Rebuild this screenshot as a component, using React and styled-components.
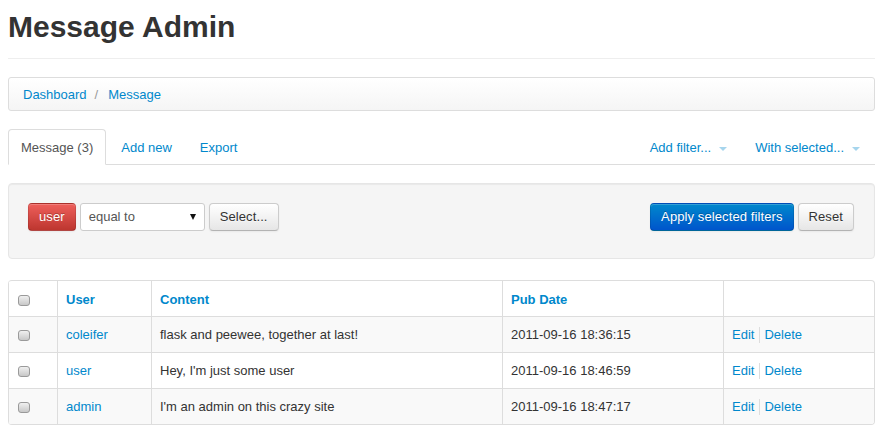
import React from "react";
import styled, { createGlobalStyle } from "styled-components";

const GlobalStyle = createGlobalStyle`
  body {
    margin: 0;
    background: #fff;
    font-family: "Liberation Sans", Arial, Helvetica, sans-serif;
    font-size: 13px;
    line-height: 18px;
    color: #333;
  }
  a {
    color: #0088cc;
    text-decoration: none;
  }
`;

const Container = styled.div`
  width: 867px;
  margin-left: 8px;
`;

const PageHeader = styled.div`
  padding: 9px 0 13px;
  margin-bottom: 18px;
  border-bottom: 1px solid #eee;
`;

const Title = styled.h1`
  margin: 0;
  font-size: 30px;
  line-height: 36px;
  font-weight: bold;
  color: #333;
`;

const Breadcrumb = styled.ul`
  list-style: none;
  margin: 0 0 18px;
  padding: 8px 14px 6px;
  display: flex;
  border: 1px solid #ddd;
  border-radius: 3px;
  background: linear-gradient(to bottom, #ffffff, #f5f5f5);
  box-shadow: inset 0 1px 0 #fff;
`;

const Crumb = styled.li`
  display: flex;
`;

const Divider = styled.span`
  color: #999;
  padding: 0 10px 0 8px;
`;

const Tabs = styled.ul`
  list-style: none;
  margin: 0 0 18px;
  padding: 0;
  display: flex;
  border-bottom: 1px solid #ddd;
`;

const Tab = styled.li`
  margin-bottom: -1px;
  margin-right: 2px;
  margin-left: ${({ $push }) => ($push ? "auto" : "0")};
`;

const TabLink = styled.a`
  display: flex;
  align-items: center;
  padding: 9px 12px 7px;
  line-height: 18px;
  border: 1px solid ${({ $active }) => ($active ? "#ddd" : "transparent")};
  border-bottom-color: transparent;
  border-radius: 4px 4px 0 0;
  background: ${({ $active }) => ($active ? "#fff" : "transparent")};
  color: ${({ $active }) => ($active ? "#555" : "#0088cc")};
`;

const Caret = styled.span`
  display: inline-block;
  width: 0;
  height: 0;
  margin-left: 8px;
  margin-top: 1px;
  border-left: 4px solid transparent;
  border-right: 4px solid transparent;
  border-top: 4px solid #0088cc;
  opacity: 0.35;
`;

const Well = styled.div`
  display: flex;
  justify-content: space-between;
  padding: 19px 20px 27px 19px;
  margin-bottom: 21px;
  background: #f5f5f5;
  border: 1px solid #e6e6e6;
  border-radius: 4px;
  box-shadow: inset 0 1px 1px rgba(0, 0, 0, 0.05);
`;

const Group = styled.div`
  display: flex;
  gap: 4px;
`;

const variants = {
  default: {
    bg: "linear-gradient(to bottom, #ffffff, #e6e6e6)",
    color: "#333",
    border: "#ccc #ccc #b3b3b3",
    shadow: "0 1px 0 rgba(255,255,255,0.5)",
  },
  danger: {
    bg: "linear-gradient(to bottom, #ee5f5b, #bd362f)",
    color: "#fff",
    border: "rgba(0,0,0,0.1) rgba(0,0,0,0.1) rgba(0,0,0,0.25)",
    shadow: "0 -1px 0 rgba(0,0,0,0.25)",
  },
  primary: {
    bg: "linear-gradient(to bottom, #0088cc, #0055cc)",
    color: "#fff",
    border: "rgba(0,0,0,0.1) rgba(0,0,0,0.1) rgba(0,0,0,0.25)",
    shadow: "0 -1px 0 rgba(0,0,0,0.25)",
  },
};

const Button = styled.button`
  font-family: inherit;
  font-size: 13px;
  line-height: 18px;
  padding: 4px 10px;
  letter-spacing: 0.1px;
  border: 1px solid;
  border-color: ${({ $kind }) => variants[$kind].border};
  border-radius: 4px;
  background: ${({ $kind }) => variants[$kind].bg};
  color: ${({ $kind }) => variants[$kind].color};
  text-shadow: ${({ $kind }) => variants[$kind].shadow};
  box-shadow: inset 0 1px 0 rgba(255, 255, 255, 0.2), 0 1px 2px rgba(0, 0, 0, 0.05);
  cursor: pointer;
`;

const Select = styled.div`
  width: 125px;
  height: 28px;
  box-sizing: border-box;
  display: flex;
  align-items: center;
  justify-content: space-between;
  padding: 0 8px 0 8px;
  background: #fff;
  border: 1px solid #ccc;
  border-radius: 3px;
  color: #555;
`;

const SelectArrow = styled.span`
  width: 0;
  height: 0;
  border-left: 3px solid transparent;
  border-right: 3px solid transparent;
  border-top: 6px solid #111;
`;

const Table = styled.table`
  width: 867px;
  border-collapse: separate;
  border-spacing: 0;
  border: 1px solid #ddd;
  border-left: 0;
  border-radius: 4px;
  overflow: hidden;
`;

const Th = styled.th`
  text-align: left;
  font-weight: bold;
  padding: 9px 8px 7px;
  line-height: 19px;
  border-left: 1px solid #ddd;
  vertical-align: top;
  color: #0088cc;
`;

const Row = styled.tr`
  background: ${({ $odd }) => ($odd ? "#f9f9f9" : "#fff")};
`;

const Td = styled.td`
  padding: 8px;
  line-height: 19px;
  border-left: 1px solid #ddd;
  border-top: 1px solid #ddd;
  vertical-align: top;
`;

const Check = styled.input.attrs({ type: "checkbox" })`
  appearance: none;
  display: block;
  width: 12px;
  height: 11px;
  margin: 5px 0 0 1px;
  border: 1px solid #9a9a9a;
  border-radius: 3px;
  background: linear-gradient(to bottom, #f0f0f0, #c8c8c8);
`;

const Actions = styled.div`
  display: flex;
  align-items: center;
`;

const Sep = styled.span`
  width: 1px;
  height: 16px;
  background: #ddd;
  margin: 0 4px 0 5px;
`;

const rows = [
  { user: "coleifer", content: "flask and peewee, together at last!", date: "2011-09-16 18:36:15" },
  { user: "user", content: "Hey, I'm just some user", date: "2011-09-16 18:46:59" },
  { user: "admin", content: "I'm an admin on this crazy site", date: "2011-09-16 18:47:17" },
];

const App = () => {
  return (
    <Container>
      <GlobalStyle />
      <PageHeader>
        <Title>Message Admin</Title>
      </PageHeader>
      <Breadcrumb>
        <Crumb>
          <a href="#">Dashboard</a>
          <Divider>/</Divider>
        </Crumb>
        <Crumb>
          <a href="#">Message</a>
        </Crumb>
      </Breadcrumb>
      <Tabs>
        <Tab>
          <TabLink $active>Message (3)</TabLink>
        </Tab>
        <Tab>
          <TabLink href="#">Add new</TabLink>
        </Tab>
        <Tab>
          <TabLink href="#">Export</TabLink>
        </Tab>
        <Tab $push>
          <TabLink href="#">
            Add filter...
            <Caret />
          </TabLink>
        </Tab>
        <Tab>
          <TabLink href="#">
            With selected...
            <Caret />
          </TabLink>
        </Tab>
      </Tabs>
      <Well>
        <Group>
          <Button $kind="danger">user</Button>
          <Select>
            <span>equal to</span>
            <SelectArrow />
          </Select>
          <Button $kind="default">Select...</Button>
        </Group>
        <Group>
          <Button $kind="primary">Apply selected filters</Button>
          <Button $kind="default">Reset</Button>
        </Group>
      </Well>
      <Table>
        <colgroup>
          <col style={{ width: 49 }} />
          <col style={{ width: 94 }} />
          <col style={{ width: 351 }} />
          <col style={{ width: 221 }} />
          <col />
        </colgroup>
        <thead>
          <tr>
            <Th>
              <Check />
            </Th>
            <Th>User</Th>
            <Th>Content</Th>
            <Th>Pub Date</Th>
            <Th></Th>
          </tr>
        </thead>
        <tbody>
          {rows.map((r, i) => (
            <Row key={r.user} $odd={i % 2 === 0}>
              <Td>
                <Check />
              </Td>
              <Td>
                <a href="#">{r.user}</a>
              </Td>
              <Td>{r.content}</Td>
              <Td>{r.date}</Td>
              <Td>
                <Actions>
                  <a href="#">Edit</a>
                  <Sep />
                  <a href="#">Delete</a>
                </Actions>
              </Td>
            </Row>
          ))}
        </tbody>
      </Table>
    </Container>
  );
};

export default App;
